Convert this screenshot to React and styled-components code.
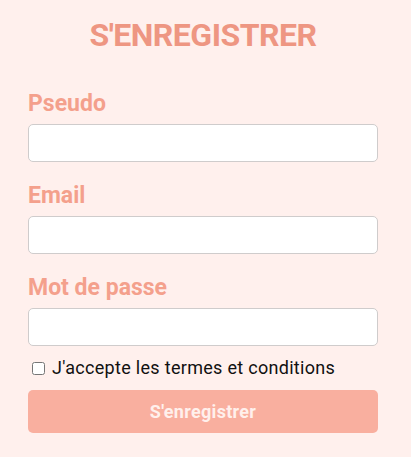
import React from "react";
import styled, { createGlobalStyle } from "styled-components";

const Global = createGlobalStyle`
  html, body {
    margin: 0;
    padding: 0;
    background: #fff0ed;
  }
  body {
    font-family: Roboto, "Liberation Sans", sans-serif;
  }
`;

const Page = styled.div`
  min-height: 457px;
  background: #fff0ed;
  padding: 15px 33px 0 28px;
  box-sizing: border-box;
`;

const Form = styled.form`
  width: 350px;
  display: flex;
  flex-direction: column;
`;

const Title = styled.h1`
  margin: 0 0 35px;
  font-size: 32px;
  line-height: 40px;
  font-weight: 700;
  letter-spacing: -0.5px;
  color: #ee9682;
  text-align: center;
`;

const Field = styled.div`
  display: flex;
  flex-direction: column;
  margin-bottom: 20px;
  &:last-of-type {
    margin-bottom: 0;
  }
`;

const Label = styled.label`
  font-size: 23px;
  line-height: 28px;
  font-weight: 700;
  color: #f4a08c;
  margin-bottom: 6px;
`;

const Input = styled.input`
  box-sizing: border-box;
  height: 38px;
  width: 100%;
  border: 1px solid #cfcccc;
  border-radius: 5px;
  background: #fff;
  padding: 0 10px;
  font-size: 16px;
  font-family: inherit;
  outline: none;
`;

const CheckRow = styled.label`
  display: flex;
  align-items: center;
  margin-top: 11px;
  height: 22px;
  font-size: 18px;
  line-height: 22px;
  letter-spacing: 0.3px;
  color: #111;
`;

const Check = styled.input`
  width: 13px;
  height: 13px;
  margin: 0 7px 0 4px;
`;

const Button = styled.button`
  margin-top: 11px;
  height: 43px;
  width: 100%;
  border: none;
  border-radius: 5px;
  background: #f9af9f;
  color: #fff0ec;
  font-family: inherit;
  font-size: 18px;
  font-weight: 700;
  letter-spacing: 0.3px;
  cursor: pointer;
`;

export default function App() {
  return (
    <>
      <Global />
      <Page>
        <Form onSubmit={(e) => e.preventDefault()}>
          <Title>S'ENREGISTRER</Title>
          <Field>
            <Label htmlFor="pseudo">Pseudo</Label>
            <Input id="pseudo" type="text" />
          </Field>
          <Field>
            <Label htmlFor="email">Email</Label>
            <Input id="email" type="email" />
          </Field>
          <Field>
            <Label htmlFor="password">Mot de passe</Label>
            <Input id="password" type="password" />
          </Field>
          <CheckRow>
            <Check type="checkbox" />
            J'accepte les termes et conditions
          </CheckRow>
          <Button type="submit">S'enregistrer</Button>
        </Form>
      </Page>
    </>
  );
}
